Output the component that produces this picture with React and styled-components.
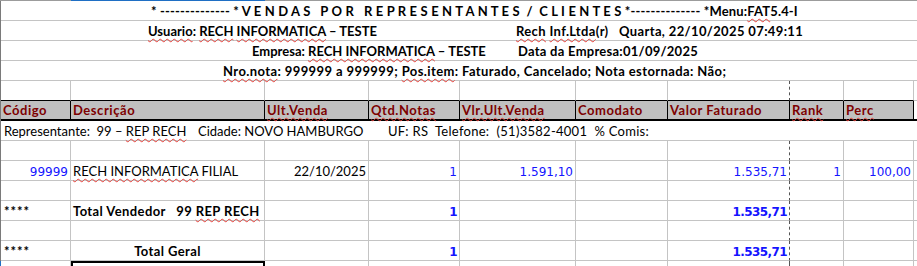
import React from 'react';
import styled, { createGlobalStyle } from 'styled-components';

const GlobalStyle = createGlobalStyle`
  html, body { margin: 0; padding: 0; background: #ffffff; }
  body { font-family: Lato, "Liberation Sans", sans-serif; overflow: hidden; }
`;

const GRID = '#c4c4c4';
const TEMPLATE = '70px 194px 104px 91px 116px 92px 122px 54px 70px 1fr';

const Sheet = styled.div`
  width: 917px;
  height: 266px;
  overflow: hidden;
  display: flex;
  flex-direction: column;
`;

const TopEdge = styled.div`
  flex: none;
  height: 1px;
  display: grid;
  grid-template-columns: 71px 194px 1fr;
`;

const EdgeSeg = styled.div`
  background: ${(p) => (p.$active ? '#1f6fc4' : '#9c9c9c')};
`;

const Row = styled.div`
  flex: none;
  display: grid;
  grid-template-columns: ${TEMPLATE};
  height: ${(p) => p.$h || 20}px;
  border-left: 1px solid ${(p) => p.$edge || '#7a7a7a'};
`;

const Cell = styled.div`
  box-sizing: border-box;
  min-width: 0;
  height: 100%;
  border-right: ${(p) =>
    p.$last ? 'none' : p.$dashed ? '1px dashed #555555' : `1px solid ${GRID}`};
  border-bottom: 1px solid ${(p) => p.$bottom || GRID};
  padding: 1px 2px 0 2px;
  font-size: 13px;
  line-height: 18px;
  white-space: pre;
  text-align: ${(p) => p.$align || 'left'};
  font-weight: ${(p) => (p.$bold ? 700 : 400)};
  letter-spacing: ${(p) => (p.$bold ? '0.4px' : '0')};
  color: #000000;
`;

const Num = styled(Cell)`
  font-family: "DejaVu Sans", Verdana, sans-serif;
  font-size: 12px;
  line-height: 16px;
  padding: 3px 2px 0 2px;
  text-align: right;
  color: #1414ff;
  letter-spacing: ${(p) => (p.$bold ? '-0.6px' : '0')};
`;

const Stars = styled(Cell)`
  font-size: 13px;
  font-weight: 700;
  letter-spacing: 1px;
  padding-left: 3px;
`;

const Head = styled(Cell)`
  background: #c0c0c0;
  border-right: 1px solid #000000;
  border-bottom: 2px solid #000000;
  color: #7d0000;
  font-weight: 700;
  letter-spacing: 0.55px;
  line-height: 17px;
`;

const HeadTail = styled(Cell)`
  border-right: none;
  border-bottom: 2px solid #000000;
`;

const Banner = styled.div`
  grid-column: 1 / -1;
  box-sizing: border-box;
  height: 100%;
  display: flex;
  border-bottom: 1px solid ${GRID};
  padding: 1px 0 0 ${(p) => p.$indent}px;
  font-size: 13px;
  line-height: 18px;
  white-space: pre;
  font-weight: ${(p) => (p.$bold ? 700 : 400)};
  letter-spacing: ${(p) => p.$ls || 0}px;
  color: #000000;
`;

const Part = styled.span`
  flex: none;
  width: ${(p) => (p.$w ? `${p.$w}px` : 'auto')};
  letter-spacing: ${(p) => p.$ls || 0}px;
`;

const Spell = styled.span`
  text-decoration: underline wavy #e5403a;
  text-decoration-thickness: 1px;
  text-underline-offset: 2px;
  text-decoration-skip-ink: none;
`;

const Selected = styled(Cell)`
  border-top: 2px solid #000000;
  border-left: 2px solid #000000;
  border-right: 2px solid #000000;
  border-bottom: none;
`;

function Blank({ bottom, dashed, last }) {
  return <Cell $bottom={bottom} $dashed={dashed} $last={last} />;
}

function EmptyRow({ bottom }) {
  return (
    <Row>
      {[0, 1, 2, 3, 4, 5, 6, 7, 8].map((i) => (
        <Blank key={i} bottom={bottom} dashed={i === 6} />
      ))}
      <Blank last />
    </Row>
  );
}

const headers = [
  'Código',
  'Descrição',
  <Spell key="u">Ult.Venda</Spell>,
  <Spell key="q">Qtd.Notas</Spell>,
  <Spell key="v">Vlr.Ult.Venda</Spell>,
  'Comodato',
  'Valor Faturado',
  <Spell key="r">Rank</Spell>,
  <Spell key="p">Perc</Spell>,
];

export default function App() {
  return (
    <>
      <GlobalStyle />
      <Sheet>
        <TopEdge>
          <EdgeSeg />
          <EdgeSeg $active />
          <EdgeSeg />
        </TopEdge>

        <Row>
          <Banner $indent={150} $bold $ls={0.15}>
            {'* -------------- * V E N D A S   P O R   R E P R E S E N T A N T E S  /  C L I E N T E S *-------------- *Menu:'}
            <Spell>FAT</Spell>
            {'5.4-I'}
          </Banner>
        </Row>
        <Row>
          <Banner $indent={147} $bold>
            <Part $w={368}>
              <Spell>Usuario</Spell>: <Spell>RECH</Spell> <Spell>INFORMATICA</Spell> – TESTE
            </Part>
            <Part $ls={0.36}>
              <Spell>Rech</Spell> <Spell>Inf.Ltda</Spell>(r)   Quarta, 22/10/2025 07:49:11
            </Part>
          </Banner>
        </Row>
        <Row>
          <Banner $indent={251} $bold>
            <Part $w={266}>
              Empresa: <Spell>RECH INFORMATICA</Spell> – TESTE
            </Part>
            <Part $ls={0.26}>Data da Empresa:01/09/2025</Part>
          </Banner>
        </Row>
        <Row>
          <Banner $indent={222} $bold $ls={0.4}>
            <Spell>Nro.nota</Spell>: 999999 a 999999; <Spell>Pos.item</Spell>: Faturado, Cancelado; Nota estornada: Não;
          </Banner>
        </Row>

        <EmptyRow bottom="#000000" />

        <Row>
          {headers.map((h, i) => (
            <Head key={i}>{h}</Head>
          ))}
          <HeadTail />
        </Row>

        <Row>
          <Banner $indent={3}>
            <Part $w={194}>
              Representante:  99 – <Spell>REP RECH</Spell>
            </Part>
            <Part $w={190}>Cidade: NOVO HAMBURGO</Part>
            <Part $ls={0.27}>UF: RS  Telefone:  (51)3582-4001  % Comis:</Part>
          </Banner>
        </Row>

        <EmptyRow />

        <Row>
          <Num>99999</Num>
          <Cell>
            <Spell>RECH INFORMATICA</Spell> FILIAL
          </Cell>
          <Cell $align="right">22/10/2025</Cell>
          <Num>1</Num>
          <Num>1.591,10</Num>
          <Blank />
          <Num $dashed>1.535,71</Num>
          <Num>1</Num>
          <Num>100,00</Num>
          <Blank last />
        </Row>

        <EmptyRow />

        <Row>
          <Stars>****</Stars>
          <Cell $bold>
            {'Total Vendedor   99 '}
            <Spell>REP RECH</Spell>
          </Cell>
          <Blank />
          <Num $bold>1</Num>
          <Blank />
          <Blank />
          <Num $bold $dashed>1.535,71</Num>
          <Blank />
          <Blank />
          <Blank last />
        </Row>

        <EmptyRow />

        <Row>
          <Stars>****</Stars>
          <Cell $bold $align="center">Total Geral</Cell>
          <Blank />
          <Num $bold>1</Num>
          <Blank />
          <Blank />
          <Num $bold $dashed>1.535,71</Num>
          <Blank />
          <Blank />
          <Blank last />
        </Row>

        <Row $h={6} $edge="#1f6fc4">
          <Blank />
          <Selected />
          <Blank />
          <Blank />
          <Blank />
          <Blank />
          <Blank dashed />
          <Blank />
          <Blank />
          <Blank last />
        </Row>
      </Sheet>
    </>
  );
}
